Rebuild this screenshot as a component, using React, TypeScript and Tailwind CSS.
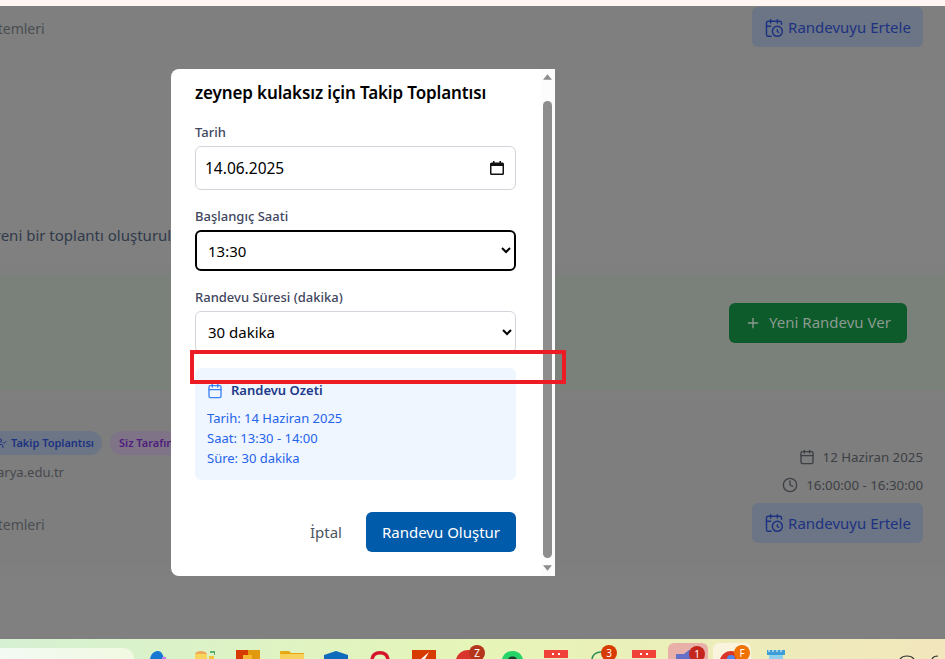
import { Calendar, CalendarClock, Clock, Plus, UserCheck } from "lucide-react";

const font = { fontFamily: '"Noto Sans", "Open Sans", sans-serif' };

function Ertele() {
  return (
    <button className="w-[171px] h-10 rounded-md bg-[#6b7585] text-[#1e3282] flex items-center justify-center gap-1 text-[15px] pt-px">
      <CalendarClock size={20} strokeWidth={1.75} />
      <span>Randevuyu Ertele</span>
    </button>
  );
}

function Badge({ text, className }: { text: string; className: string }) {
  return (
    <span className={`absolute w-4 h-4 rounded-full text-[10px] leading-4 text-center text-white ${className}`}>
      {text}
    </span>
  );
}

function RedApp({ className }: { className: string }) {
  return (
    <svg width="24" height="8" viewBox="0 0 24 8" className={className}>
      <rect width="24" height="8" fill="#f04238" />
      <rect x="8" y="3" width="2" height="2" fill="#fff" />
      <rect x="14" y="3" width="2" height="2" fill="#fff" />
    </svg>
  );
}

function Taskbar() {
  return (
    <div className="h-[20px] flex-none relative bg-gradient-to-r from-[#d5f0d2] via-[#e6f5b8] to-[#f2e6bc] overflow-hidden">
      <div className="absolute left-0 bottom-0 w-[134px] h-[11px] rounded-tr-[16px] bg-gradient-to-r from-[#f2faf4] to-[#f2f9e2]" />
      <div className="absolute left-[150px] top-[12px] flex items-start">
        <svg width="16" height="8" viewBox="0 0 16 8">
          <path d="M0 8C1 2 5 0 8 0s5 3 6 8Z" fill="#1678d2" />
          <rect x="12" y="6" width="4" height="2" fill="#c27ce8" />
        </svg>
        <svg width="20" height="8" viewBox="0 0 20 8" className="ml-[29px]">
          <ellipse cx="6" cy="3" rx="6" ry="3" fill="#f0a95a" />
          <rect y="3" width="12" height="5" fill="#f8d65c" />
          <path d="M15 1h5v3" fill="none" stroke="#2e9e5b" strokeWidth="1.5" />
          <rect x="14" y="5" width="5" height="3" fill="#f3c53a" />
        </svg>
        <svg width="24" height="9" viewBox="0 0 24 9" className="ml-[21px] -mt-px">
          <rect width="12" height="9" fill="#d83b01" />
          <rect x="12" width="12" height="9" fill="#e19a10" />
          <rect x="7" y="5" width="9" height="4" fill="#f5b82e" />
        </svg>
        <svg width="24" height="8" viewBox="0 0 24 8" className="ml-[20px]">
          <path d="M0 8V1q0-1 1-1h8l2 2h13v6Z" fill="#e8a812" />
          <rect y="3" width="24" height="5" fill="#f6d25c" />
        </svg>
        <svg width="24" height="8" viewBox="0 0 24 8" className="ml-[20px]">
          <path d="M0 8V4l12-4 12 4v4Z" fill="#0f6cbd" />
        </svg>
        <svg width="20" height="8" viewBox="0 0 20 8" className="ml-[22px]">
          <path d="M2 8C3 3 6 1.800 10 1.800S17 3 18 8" fill="none" stroke="#d4142a" strokeWidth="3.500" />
        </svg>
        <svg width="24" height="9" viewBox="0 0 24 9" className="ml-[22px] -mt-px">
          <rect width="24" height="9" fill="#d83b01" />
          <path d="M9 9 17 2 13 9Z" fill="#fff" />
        </svg>
        <svg width="24" height="9" viewBox="0 0 24 9" className="ml-[20px] -mt-px">
          <path d="M0 9C2 3 7 0 12 0s10 3 12 9Z" fill="#d9352a" />
        </svg>
        <svg width="21" height="8" viewBox="0 0 21 8" className="ml-[22px]">
          <path d="M0 8C2 2 6 0 10.500 0S19 2 21 8Z" fill="#25d366" />
          <path d="M6 8C7 6 9 5.500 10.500 5.500S14 6 15 8Z" fill="#1d3b2a" />
        </svg>
        <RedApp className="ml-[21px] -mt-px" />
        <svg width="22" height="8" viewBox="0 0 22 8" className="ml-[22px]">
          <path d="M2 8C3 3 7 1 11 1s8 2 9 7" fill="none" stroke="#2e8b57" strokeWidth="1.500" />
        </svg>
        <RedApp className="ml-[20px] -mt-px" />
      </div>
      <Badge text="Z" className="left-[469px] top-[6px] bg-[#b5351c]" />
      <Badge text="3" className="left-[601px] top-[6px] bg-[#d83b01]" />

      <div className="absolute left-[668px] top-[4px] w-10 h-4 rounded-t-md bg-[#e8b0a8]" />
      <svg width="20" height="9" viewBox="0 0 20 9" className="absolute left-[676px] top-[11px]">
        <path d="M0 9V4h8l5-4h7v9Z" fill="#6470c8" />
      </svg>
      <Badge text="1" className="left-[689px] top-[7px] bg-[#c4261d]" />

      <div className="absolute left-[713px] top-[4px] w-[38px] h-4 rounded-t-md bg-[#faf4de]" />
      <svg width="22" height="8" viewBox="0 0 22 8" className="absolute left-[720px] top-[12px]">
        <path d="M0 8C2 3 6 0 11 0s9 3 11 8Z" fill="#d9352a" />
        <circle cx="11" cy="8" r="4" fill="#4a8cf0" />
      </svg>
      <Badge text="F" className="left-[734px] top-[6px] bg-[#f07000]" />

      <svg width="18" height="9" viewBox="0 0 18 9" className="absolute left-[767px] top-[11px]">
        <rect width="18" height="5" fill="#3d9fd6" />
        <rect x="2" y="5" width="14" height="4" fill="#8fd0ee" />
        <path d="M2 0v2M6 0v2M10 0v2M14 0v2" stroke="#fff" strokeWidth="1" />
      </svg>
      <svg width="16" height="4" viewBox="0 0 16 4" className="absolute left-[899px] top-[16px]">
        <path d="M1 4C3 1.500 5 1 8 1s5 .5 7 3" fill="none" stroke="#333" strokeWidth="1.200" />
      </svg>
      <svg width="8" height="4" viewBox="0 0 8 4" className="absolute left-[931px] top-[16px]">
        <path d="M1 4C2 2 4 1 7 1" fill="none" stroke="#333" strokeWidth="1.200" />
      </svg>
    </div>
  );
}

export default function App() {
  return (
    <div style={font} className="relative w-[945px] h-[659px] overflow-hidden flex flex-col bg-[#7f7f7f]">
      <div className="h-[6px] flex-none bg-[#fff5f3]" />

      {/* dimmed page */}
      <div className="flex-1 flex flex-col bg-[#7e7f7e] text-[#3b4250] text-sm">
        <div className="h-10 mt-[1px] pr-[22px] flex items-center justify-between">
          <span className="text-[#4a4d52] -ml-[9px] mt-[4px]">stemleri</span>
          <Ertele />
        </div>
        <div className="mt-[33px] h-[184px] bg-[#808080] flex items-end pb-[18px]">
          <span className="-ml-[7px] text-[15px] text-[#2f3a4a] whitespace-nowrap">yeni bir toplantı oluşturulacak</span>
        </div>
        <div className="mt-[11px] h-[115px] bg-[#7a807a] flex items-start justify-end pt-[28px] pr-[38px]">
          <button className="w-[178px] h-10 rounded-md bg-[#0d5a2a] text-[#8b9a90] flex items-center justify-center gap-2 text-[15px]">
            <Plus size={16} />
            <span>Yeni Randevu Ver</span>
          </button>
        </div>
        <div className="mt-[10px] h-[165px] bg-[#7e7e7e] flex flex-col">
          <div className="flex justify-between pr-[22px] pt-[31px]">
            <div className="flex flex-col">
              <div className="flex gap-2 text-[11px] font-semibold -ml-[10px]">
                <span className="h-6 rounded-full bg-[#6b7585] text-[#1e3282] flex items-center gap-1 pl-[5px] pr-[8px]">
                  <UserCheck size={12} /> Takip Toplantısı
                </span>
                <span className="h-6 rounded-full bg-[#7f7388] text-[#4f1d7c] flex items-center pl-[9px] pr-4 whitespace-nowrap">
                  Siz Tarafından
                </span>
              </div>
              <span className="mt-[8px] -ml-[3px] text-[13px] text-[#45484d]">arya.edu.tr</span>
            </div>
            <div className="flex flex-col items-end gap-[9px] text-[13.3px] text-[#3d4045] mt-[17px]">
              <span className="flex items-center gap-2"><Calendar size={16} /> 12 Haziran 2025</span>
              <span className="flex items-center gap-2"><Clock size={16} /> 16:00:00 - 16:30:00</span>
            </div>
          </div>
          <div className="mt-[8px] pr-[22px] flex items-center justify-between">
            <span className="text-[#4a4d52] -ml-[9px] mt-[4px]">stemleri</span>
            <Ertele />
          </div>
        </div>
        <div className="mt-[10px] flex-1 bg-[#808080]" />
      </div>

      <Taskbar />

      {/* modal */}
      <div className="absolute left-[171px] top-[69px] w-[384px] h-[507px] bg-white rounded-l-lg flex overflow-hidden">
        <div className="flex-1 pl-6 pr-[25px] pt-[11px]">
          <h2 className="text-[17px] leading-[26px] font-semibold text-black tracking-[-0.135px]">zeynep kulaksız için Takip Toplantısı</h2>

          <label className="block mt-[16px] text-[13px] leading-5 font-medium text-[#414660]">Tarih</label>
          <div className="mt-1 h-[44px] rounded-md border border-[#d1d5db] flex items-center justify-between pl-[9px] pr-[11px] text-[15.5px] text-black">
            <span className="pt-px">14.06.2025</span>
            <svg width="14" height="14" viewBox="0 0 14 14">
              <path d="M3 0h1.500v1.500h5V0H11v1.500h1.500A1.500 1.500 0 0 1 14 3v9.500a1.500 1.500 0 0 1-1.500 1.500h-11A1.500 1.500 0 0 1 0 12.500V3a1.500 1.500 0 0 1 1.500-1.500H3ZM1.500 5v7.500h11V5Z" fill="#111" fillRule="evenodd" />
            </svg>
          </div>

          <label className="block mt-[16px] text-[13px] leading-5 font-medium text-[#414660]">Başlangıç Saati</label>
          <select defaultValue="13:30" className="mt-1 block w-full h-[41px] rounded-md border-2 border-black pl-[7px] text-[15px] text-black bg-white">
            <option>13:30</option>
          </select>

          <label className="block mt-[16px] text-[13px] leading-5 font-medium text-[#414660]">Randevu Süresi (dakika)</label>
          <select defaultValue="30 dakika" className="mt-1 block w-full h-[42px] rounded-md border border-[#d1d5db] pl-2 text-[15px] text-black bg-white">
            <option>30 dakika</option>
          </select>

          <div className="mt-[15px] h-[112px] rounded-md bg-[#eff6ff] px-3 pt-[13px]">
            <div className="flex items-center gap-2 text-[13px] font-semibold text-[#1e3a8a] h-5">
              <Calendar size={16} className="text-[#3b82f6]" />
              <span>Randevu Ozeti</span>
            </div>
            <div className="mt-[7px] text-[13px] leading-5 text-[#2563eb]">
              <p>Tarih: 14 Haziran 2025</p>
              <p>Saat: 13:30 - 14:00</p>
              <p>Süre: 30 dakika</p>
            </div>
          </div>

          <div className="mt-[32px] flex items-center justify-end gap-6">
            <span className="text-[15px] text-[#4b5563]">İptal</span>
            <button className="w-[150px] h-10 rounded-md bg-[#005baa] text-white text-[15px]">Randevu Oluştur</button>
          </div>
        </div>

        <div className="w-[14px] flex-none bg-[#fcfcfc] flex flex-col items-start pl-[2px]">
          <svg width="9" height="6" viewBox="0 0 10 6" className="mt-[5px] flex-none"><path d="M5 0 10 6H0Z" fill="#8d8d8d" /></svg>
          <div className="mt-[21px] w-[9px] h-[457px] rounded-full bg-[#8d8d8d]" />
          <svg width="9" height="6" viewBox="0 0 10 6" className="mt-[7px] flex-none"><path d="M0 0H10L5 6Z" fill="#8d8d8d" /></svg>
        </div>
      </div>

      {/* annotation */}
      <div className="absolute left-[190px] top-[350px] w-[376px] h-[34px] border-4 border-[#ed1c24]" />
    </div>
  );
}
